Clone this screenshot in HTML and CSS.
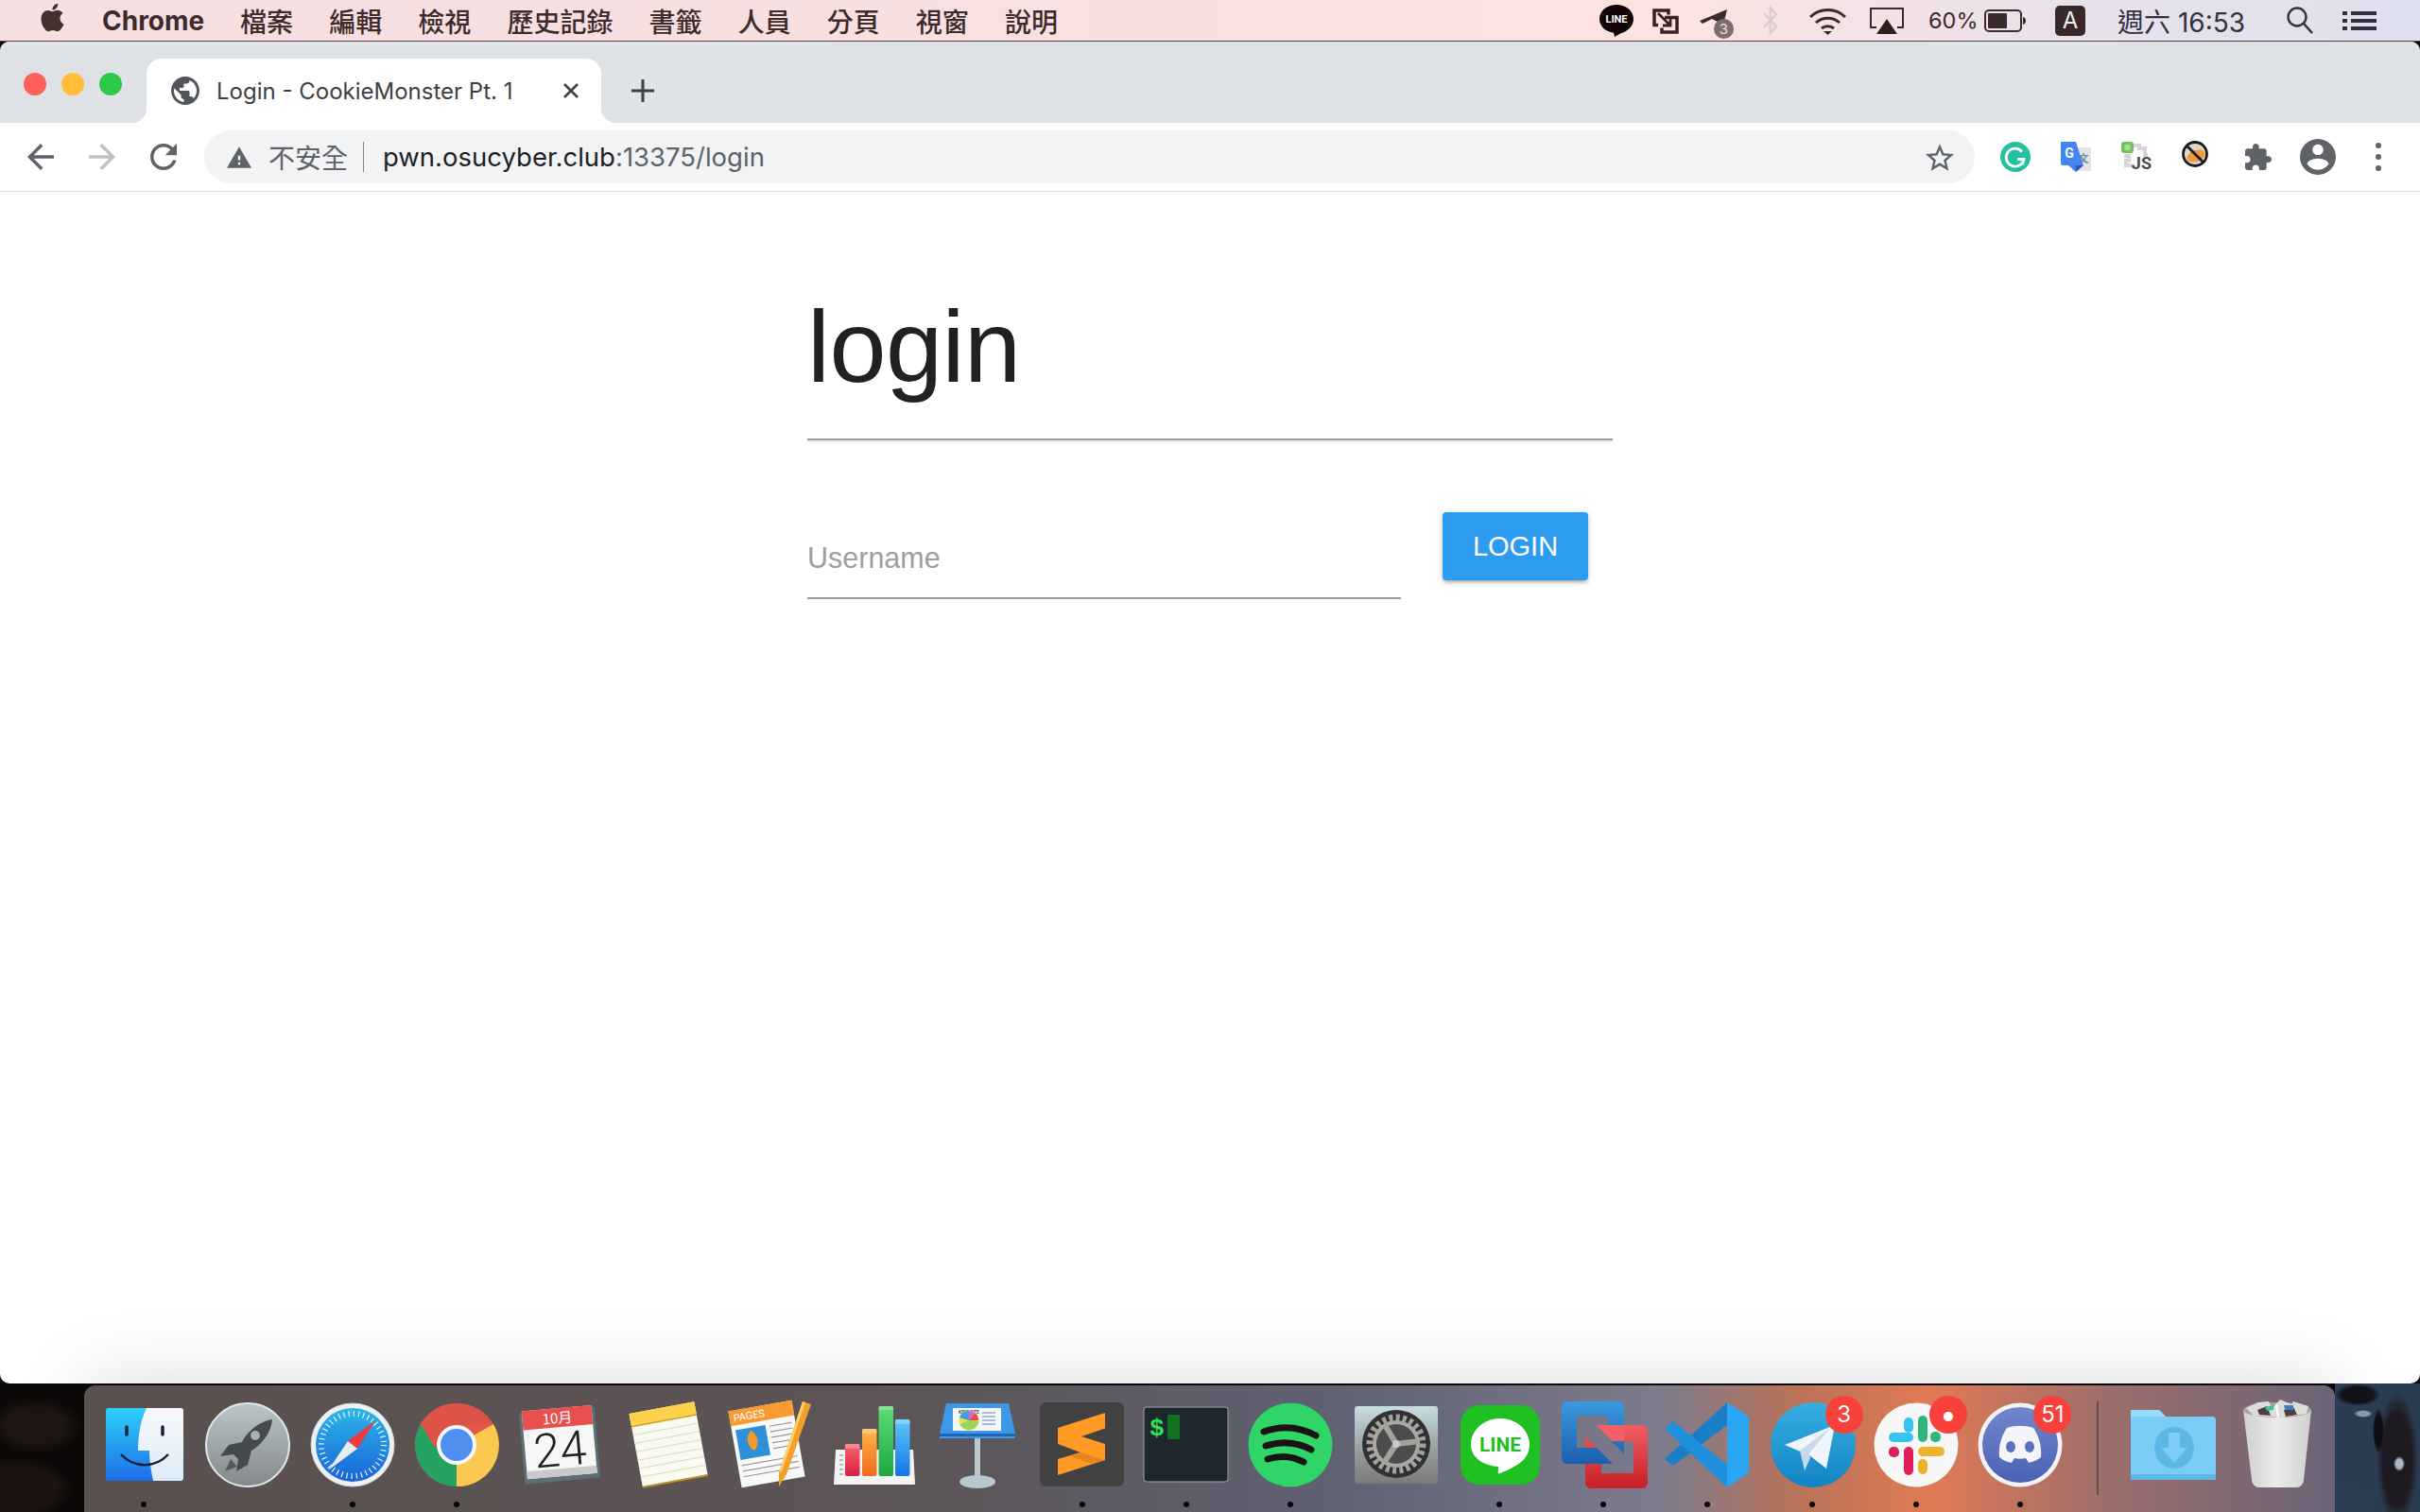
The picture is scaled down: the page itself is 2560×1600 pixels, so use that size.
FILE: index.html
```html
<!DOCTYPE html>
<html lang="zh-Hant">
<head>
<meta charset="UTF-8">
<title>Login - CookieMonster Pt. 1</title>
<link rel="stylesheet" href="styles.css">
</head>

<body>
<!-- mac menu bar -->
<div class="menubar">
    <svg class="apple" viewBox="3 1.5 18 21"><path d="M18.71 19.5c-.83 1.24-1.71 2.45-3.05 2.47-1.34.03-1.77-.79-3.29-.79-1.53 0-2 .77-3.27.82-1.31.05-2.3-1.32-3.14-2.53C4.25 17 2.94 12.45 4.7 9.39c.87-1.52 2.43-2.48 4.12-2.51 1.28-.02 2.5.87 3.29.87.78 0 2.26-1.07 3.81-.91.65.03 2.47.26 3.64 1.98-.09.06-2.17 1.28-2.15 3.81.03 3.02 2.65 4.03 2.68 4.04-.03.07-.42 1.44-1.38 2.83M13 3.5c.73-.83 1.94-1.46 2.94-1.5.13 1.17-.34 2.35-1.04 3.19-.69.85-1.83 1.51-2.95 1.42-.15-1.15.41-2.35 1.05-3.11z"/></svg>
    <ul class="menu">
        <li class="app">Chrome</li><li>檔案</li><li>編輯</li><li>檢視</li><li>歷史記錄</li><li>書籤</li><li>人員</li><li>分頁</li><li>視窗</li><li>說明</li>
    </ul>
    <div class="status">
        <svg class="st-line" viewBox="0 0 36 34"><path d="M18 0c10 0 18 6.500 18 15 0 8-6 13-14 15.500L16 34l-1-4.200C6.500 28.500 0 23 0 15 0 6.500 8 0 18 0z" fill="#120606"/><text x="18" y="19" class="st-line-text">LINE</text></svg>
        <svg class="st-vm" viewBox="0 0 28 29"><path d="M6 19.500H2V4h15v4.500M13 11.500H26V27H10v-4.500" stroke="#3a2020" stroke-width="3.500" fill="none"/><path d="M6 7l13 13M11 20h8v-8" stroke="#3a2020" stroke-width="2.800" fill="none"/></svg>
        <div class="st-tg">
            <svg viewBox="0 0 37 31"><path d="M1 16L30 4 26 20 14 14 4 19z" fill="#3a2a2a"/></svg>
            <span class="tg-count">3</span>
        </div>
        <svg class="st-bt" viewBox="0 0 19 31"><path d="M3 8l13 14-6.500 7V2L16 9 3 23" fill="none" stroke="#d8cccc" stroke-width="2"/></svg>
        <svg class="st-wifi" viewBox="0 0 41 30"><path d="M2 11c10-10 27-10 37 0M8 17c7-6.500 18-6.500 25 0M14 23c3.500-3 9.500-3 13 0" fill="none" stroke="#3a2a2a" stroke-width="3"/><path d="M16 26h9l-4.500 4z" fill="#3a2a2a"/></svg>
        <svg class="st-air" viewBox="0 0 36 28"><path d="M7 21H1V1h34v20h-6" fill="none" stroke="#3a2a2a" stroke-width="2"/><path d="M18 12l11 16H7z" fill="#2e2020"/></svg>
        <span class="st-pct">60%</span>
        <svg class="st-bat" viewBox="0 0 44 24"><rect x="1" y="1" width="38" height="22" rx="4" fill="none" stroke="#3a2a2a" stroke-width="2"/><rect x="4" y="4" width="20" height="16" rx="1" fill="#3a2a2a"/><path d="M41 8c2 .5 3 2 3 4s-1 3.500-3 4z" fill="#3a2a2a"/></svg>
        <span class="st-input">A</span>
        <span class="st-clock">週六 16:53</span>
        <svg class="st-search" viewBox="0 0 28 29"><circle cx="11" cy="11" r="9.500" fill="none" stroke="#32323c" stroke-width="2.400"/><path d="M18 18l9 10" stroke="#32323c" stroke-width="2.600"/></svg>
        <svg class="st-list" viewBox="0 0 36 20"><path d="M0 0h5v4H0zM9 0h27v4H9zM0 8h5v4H0zM9 8h27v4H9zM0 16h5v4H0zM9 16h27v4H9z" fill="#30303e"/></svg>
    </div>
</div>

<div class="window">
    <div class="tabstrip">
        <div class="lights"><i class="red"></i><i class="yellow"></i><i class="green"></i></div>
        <div class="tab">
            <svg class="favicon" viewBox="2 2 20 20"><path d="M12 2C6.480 2 2 6.480 2 12s4.480 10 10 10 10-4.480 10-10S17.520 2 12 2zm-1 17.930c-3.950-.49-7-3.850-7-7.930 0-.62.08-1.210.21-1.790L9 15v1c0 1.100.9 2 2 2v1.930zm6.900-2.540c-.26-.81-1-1.390-1.900-1.390h-1v-3c0-.55-.45-1-1-1H8v-2h2c.55 0 1-.45 1-1V7h2c1.100 0 2-.9 2-2v-.41c2.930 1.190 5 4.060 5 7.410 0 2.080-.8 3.970-2.100 5.390z"/></svg>
            <span class="tab-title">Login - CookieMonster Pt. 1</span>
            <svg class="tab-close" viewBox="0 0 16 16"><path d="M1 1l14 14M15 1L1 15" stroke="#3c4043" stroke-width="2.600"/></svg>
        </div>
        <svg class="newtab" viewBox="0 0 24 24"><path d="M12 0v24M0 12h24" stroke="#3c4043" stroke-width="3"/></svg>
    </div>

    <div class="toolbar">
        <svg class="nav nav-back" viewBox="4 4 16 16"><path d="M20 11H7.830l5.590-5.590L12 4l-8 8 8 8 1.410-1.410L7.830 13H20v-2z"/></svg>
        <svg class="nav nav-fwd" viewBox="4 4 16 16"><path d="M12 4l-1.410 1.410L16.170 11H4v2h12.170l-5.580 5.590L12 20l8-8z"/></svg>
        <svg class="nav nav-reload" viewBox="4 4 16 16"><path d="M17.650 6.350C16.200 4.900 14.210 4 12 4c-4.420 0-7.990 3.580-7.990 8s3.570 8 7.990 8c3.730 0 6.840-2.550 7.730-6h-2.080c-.82 2.330-3.040 4-5.650 4-3.310 0-6-2.690-6-6s2.690-6 6-6c1.660 0 3.140.69 4.220 1.780L13 11h7V4l-2.350 2.350z"/></svg>
        <div class="omnibox">
            <svg class="warn" viewBox="1 2 22 19"><path d="M1 21h22L12 2 1 21zm12-3h-2v-2h2v2zm0-4h-2v-4h2v4z"/></svg>
            <span class="insecure">不安全</span>
            <span class="sep"></span>
            <span class="url"><b>pwn.osucyber.club</b>:13375/login</span>
            <svg class="star" viewBox="2 2 20 19"><path d="M22 9.240l-7.190-.62L12 2 9.190 8.630 2 9.240l5.460 4.730L5.820 21 12 17.270 18.180 21l-1.630-7.030L22 9.240zM12 15.400l-3.760 2.270 1-4.280-3.320-2.880 4.380-.38L12 6.100l1.710 4.040 4.380.38-3.320 2.880 1 4.280L12 15.400z"/></svg>
        </div>
        <div class="ext">
            <svg class="ext-gr" viewBox="0 0 32 32"><circle cx="16" cy="16" r="16" fill="#25c19f"/><path d="M23 10.500A9.500 9.500 0 1 0 25 18.500H18M25 18.500l-1.500 6" fill="none" stroke="#fff" stroke-width="2.800"/></svg>
            <svg class="ext-tr" viewBox="0 0 32 32"><rect x="12" y="6" width="20" height="25" fill="#e2e4e6"/><path d="M0 0h16l8 25H17l-1 7-8-7H2a2 2 0 0 1-2-2z" fill="#4285f4"/><path d="M16 25h8l-8 7z" fill="#2a56c6"/><text x="9" y="17" class="ext-g">G</text><text x="24" y="22" class="ext-wen">文</text></svg>
            <svg class="ext-js" viewBox="0 0 33 32"><path d="M13 4h6v3h6v7h3M3 15h5v5h-3v5h9" fill="none" stroke="#d6d6d6" stroke-width="4"/><rect x="0" y="0" width="13" height="12" rx="3" fill="#6fc25a"/><rect x="3.500" y="3" width="6" height="6" fill="#a8dc96"/><text x="32" y="29" class="ext-jstext">JS</text></svg>
            <svg class="ext-no" viewBox="0 0 28 28"><circle cx="14" cy="14" r="12.500" fill="#dfd8cc" stroke="#1c1c1c" stroke-width="2.800"/><ellipse cx="15" cy="16" rx="10" ry="6" fill="#ef9a3c" transform="rotate(-20 15 16)"/><path d="M5 5l18 18" stroke="#1c1c1c" stroke-width="2.800"/></svg>
            <svg class="ext-pz" viewBox="2 1 21 21"><path d="M20.500 11H19V7c0-1.100-.9-2-2-2h-4V3.500C13 2.120 11.880 1 10.500 1S8 2.120 8 3.500V5H4c-1.100 0-1.990.9-1.990 2v3.800H3.500c1.490 0 2.700 1.210 2.700 2.700s-1.210 2.700-2.700 2.700H2V20c0 1.100.9 2 2 2h3.800v-1.500c0-1.490 1.210-2.700 2.700-2.700 1.490 0 2.700 1.210 2.700 2.700V22H17c1.100 0 2-.9 2-2v-4h1.500c1.380 0 2.500-1.120 2.500-2.500S21.880 11 20.500 11z"/></svg>
            <svg class="ext-ac" viewBox="2 2 20 20"><path d="M12 2C6.480 2 2 6.480 2 12s4.480 10 10 10 10-4.480 10-10S17.520 2 12 2zm0 3c1.660 0 3 1.340 3 3s-1.340 3-3 3-3-1.340-3-3 1.340-3 3-3zm0 14.200c-2.500 0-4.710-1.280-6-3.220.03-1.990 4-3.080 6-3.080 1.990 0 5.970 1.090 6 3.080-1.290 1.940-3.500 3.220-6 3.220z"/></svg>
            <div class="ext-dots"><i></i><i></i><i></i></div>
        </div>
    </div>

    <div class="page">
        <div class="box">
            <h1>login</h1>
            <hr>
            <form class="login-form" action="/" method="get">
                <input class="username" type="text" placeholder="Username">
                <button class="login-btn" type="button">LOGIN</button>
            </form>
        </div>
    </div>
</div>

<!-- dock -->
<div class="dockrow">
    <div class="dock">
        <div class="item on"><svg viewBox="0 0 90 90">
            <defs><linearGradient id="fb" x1="0" y1="0" x2="0" y2="1"><stop offset="0" stop-color="#2cd0fb"/><stop offset="1" stop-color="#1d6fe8"/></linearGradient>
            <linearGradient id="fw" x1="0" y1="0" x2="0" y2="1"><stop offset="0" stop-color="#f8f9fb"/><stop offset="1" stop-color="#dcebf6"/></linearGradient></defs>
            <rect x="5" y="6" width="82" height="77" rx="3" fill="url(#fb)"/>
            <path d="M48 6h36a3 3 0 0 1 3 3v71a3 3 0 0 1-3 3H55c-2-10-4-20-4-32H39c0-18 3-32 9-45z" fill="url(#fw)"/>
            <path d="M27 26v8M65 26v8" stroke="#14233c" stroke-width="3.500" stroke-linecap="round"/>
            <path d="M21 55c14 15 36 15 50 0" fill="none" stroke="#14203a" stroke-width="2.500"/>
        </svg></div>
        <div class="item"><svg viewBox="0 0 90 90">
            <defs><linearGradient id="lp" x1="0" y1="0" x2="0" y2="1"><stop offset="0" stop-color="#b9c6c9"/><stop offset="1" stop-color="#84888a"/></linearGradient></defs>
            <circle cx="45" cy="45" r="44" fill="url(#lp)" stroke="#dfe6e8" stroke-width="2"/>
            <path d="M71 18c-13 2-26 12-32 24l-14 3-9 12 14-2 5 5-2 13 12-7 4-15c12-7 21-20 22-33z" fill="#454a4c"/>
            <path d="M27 60l-6 13 13-5z" fill="#55595b"/>
            <circle cx="53" cy="35" r="5" fill="#a9b1b3"/>
        </svg></div>
        <div class="item on"><svg viewBox="0 0 90 90">
            <defs><linearGradient id="sf" x1="0" y1="0" x2="0" y2="1"><stop offset="0" stop-color="#2bb6e8"/><stop offset="1" stop-color="#1a64d8"/></linearGradient></defs>
            <circle cx="45" cy="45" r="44" fill="#eef1f4" stroke="#cfd2d6"/>
            <circle cx="45" cy="45" r="39" fill="url(#sf)"/>
            <circle cx="45" cy="45" r="33" fill="none" stroke="#e9f3fb" stroke-width="6" stroke-dasharray="1.200 4"/>
            <path d="M69 19L40 41l10 8z" fill="#ef3a3f"/>
            <path d="M19 72l31-23-10-8z" fill="#e8ecef"/>
        </svg></div>
        <div class="item on"><svg viewBox="0 0 90 90">
            <circle cx="45" cy="45" r="44" fill="#e2574c"/>
            <path d="M45 45L84 23A44 44 0 0 1 45 89z" fill="#fdc84f"/>
            <path d="M45 45L45 89A44 44 0 0 1 7 23z" fill="#24a262"/>
            <path d="M45 1A44 44 0 0 1 84 23H45L22 48 7 23A44 44 0 0 1 45 1z" fill="#dd5348"/>
            <circle cx="45" cy="45" r="21" fill="#f4f6f8"/>
            <circle cx="45" cy="45" r="17" fill="#4f8ff0"/>
        </svg></div>
        <div class="item"><svg viewBox="0 0 90 90">
            <g transform="rotate(-5 45 45)">
            <rect x="4" y="8" width="80" height="75" fill="#5c6f78"/>
            <rect x="7" y="6" width="74" height="72" fill="#f7f7f7"/>
            <rect x="7" y="6" width="74" height="20" fill="#e8504e"/>
            <rect x="7" y="70" width="74" height="8" fill="#c9c9c9"/>
            <text x="44" y="22" class="cal-month">10月</text>
            <text x="44" y="67" class="cal-day">24</text>
            </g>
        </svg></div>
        <div class="item"><svg viewBox="0 0 90 90">
            <g transform="rotate(-10.500 49 44)">
            <rect x="14" y="5" width="70" height="79" fill="#fbfaef"/>
            <rect x="14" y="5" width="70" height="14" fill="#fbd249"/>
            <path d="M14 19h70" stroke="#c9a02c" stroke-width="1.500"/>
            <path d="M14 28h70M14 37h70M14 46h70M14 55h70M14 64h70M14 73h70" stroke="#d9d9d2"/>
            <path d="M14 84h70" stroke="#b98f2a" stroke-width="2"/>
            </g>
        </svg></div>
        <div class="item"><svg viewBox="0 0 90 90">
            <g transform="rotate(-10 42 44)">
            <rect x="8" y="3" width="68" height="82" fill="#f9f9f9"/>
            <rect x="8" y="3" width="68" height="16" fill="#f79a2f"/>
            <text x="12" y="15" class="pg-title">PAGES</text>
            <rect x="12" y="24" width="32" height="32" fill="#2f8fd8"/>
            <path d="M28 27c6 5 8 14 0 22-8-8-6-17 0-22z" fill="#f39a2b"/>
            <path d="M48 26h24M48 32h24M48 38h24M48 44h24M48 50h24M12 62h60M12 68h60M12 74h60" stroke="#9a9a9a" stroke-width="1.200"/>
            </g>
            <path d="M80-1l9 3L63 76l-8 13 0-15z" fill="#f2a027"/>
            <path d="M80-1l3 1-25 73-3 1z" fill="#ffcf6e"/>
        </svg></div>
        <div class="item"><svg viewBox="0 0 90 90">
            <defs>
            <linearGradient id="n1" x1="0" y1="0" x2="0" y2="1"><stop offset="0" stop-color="#f9646b"/><stop offset="1" stop-color="#d62041"/></linearGradient>
            <linearGradient id="n2" x1="0" y1="0" x2="0" y2="1"><stop offset="0" stop-color="#ffb54a"/><stop offset="1" stop-color="#f06a1c"/></linearGradient>
            <linearGradient id="n3" x1="0" y1="0" x2="0" y2="1"><stop offset="0" stop-color="#5ade75"/><stop offset="1" stop-color="#1ea83e"/></linearGradient>
            <linearGradient id="n4" x1="0" y1="0" x2="0" y2="1"><stop offset="0" stop-color="#5cc8fa"/><stop offset="1" stop-color="#1475e4"/></linearGradient>
            </defs>
            <path d="M5 50H87L89 87H3z" fill="#f3f3f3"/>
            <path d="M9 56h4M9 61h4M9 66h4M9 71h4M9 76h4" stroke="#a9a9a9" stroke-width="1.500"/>
            <rect x="15" y="44" width="15.500" height="34" rx="2" fill="url(#n1)"/>
            <rect x="33" y="28" width="15.500" height="50" rx="2" fill="url(#n2)"/>
            <rect x="50.500" y="4" width="15.500" height="74" rx="2" fill="url(#n3)"/>
            <rect x="68" y="18" width="15.500" height="60" rx="2" fill="url(#n4)"/>
            <path d="M15 44h15.500v5H15zM33 28h15.500v5H33zM50.500 4H66v4H50.500zM68 18h15.500v5H68z" fill="#fff" opacity=".25"/>
        </svg></div>
        <div class="item"><svg viewBox="0 0 90 90">
            <rect x="42" y="38" width="6" height="42" fill="#b9c7d0"/>
            <ellipse cx="45" cy="84" rx="19" ry="7" fill="#b8c6d0"/>
            <path d="M12 1H78L85 33V38H5V33z" fill="#3f97e8"/>
            <rect x="19" y="6" width="51" height="24" fill="#f5f6f7"/>
            <text x="25" y="12" class="kn-title">KEYNOTE</text>
            <circle cx="36" cy="19" r="10.500" fill="#e8e04c"/>
            <path d="M36 19v-10.500a10.500 10.500 0 0 0-10 7.500z" fill="#3f9fe0"/>
            <path d="M36 19v-10.500a10.500 10.500 0 0 1 7 3z" fill="#d668d8"/>
            <path d="M36 19l7-7.500a10.500 10.500 0 0 1 3 7.500z" fill="#e8484c"/>
            <path d="M36 19l10.500 1a10.500 10.500 0 0 1-20 3z" fill="#9ad55c"/>
            <path d="M50 11h14M50 15h14M50 19h14M50 23h14" stroke="#8aa8cc" stroke-width="1.500"/>
            <path d="M5 33H85V36H5z" fill="#1d65b5"/>
        </svg></div>
        <div class="item on"><svg viewBox="0 0 90 90">
            <rect x="0" y="0" width="89" height="89" rx="6" fill="#424242"/>
            <path d="M69 11L19 27V44L43 53 19 60V77L69 61V44L44 36 69 27.500z" fill="#ff9b24"/>
            <path d="M43 53L69 61 55 65 31 56.500z" fill="#e8861c"/>
        </svg></div>
        <div class="item on"><svg viewBox="0 0 90 90">
            <rect x="0" y="5" width="89" height="79" rx="3" fill="#1f272e" stroke="#9ca3a8"/>
            <text x="6" y="35" class="term-prompt">$</text>
            <rect x="25" y="13" width="13" height="26" fill="#13701f"/>
        </svg></div>
        <div class="item on"><svg viewBox="0 0 90 90">
            <circle cx="45" cy="45" r="44.500" fill="#2fd566"/>
            <path d="M17 31c19-7 38-5 55 4M19 46c16-5 33-4 48 4M21 60c13-4 27-3 38 3" fill="none" stroke="#191414" stroke-width="7" stroke-linecap="round"/>
        </svg></div>
        <div class="item"><svg viewBox="0 0 90 90">
            <defs><linearGradient id="sp" x1="0" y1="0" x2="0" y2="1"><stop offset="0" stop-color="#c8dde2"/><stop offset=".55" stop-color="#9a9fa1"/><stop offset="1" stop-color="#7a7a7a"/></linearGradient></defs>
            <rect x="2" y="4" width="88" height="82" rx="3" fill="url(#sp)"/>
            <circle cx="46" cy="44" r="36" fill="#303133"/>
            <circle cx="46" cy="44" r="28" fill="none" stroke="#a5a29e" stroke-width="7" stroke-dasharray="4 3.300"/>
            <circle cx="46" cy="44" r="23" fill="#4c4c4c" stroke="#aaa7a3" stroke-width="4"/>
            <path d="M46 44L34 24M46 44L71 41M46 44L33 64" stroke="#a5a29e" stroke-width="6"/>
            <circle cx="46" cy="44" r="4" fill="#c8c9cb"/>
        </svg></div>
        <div class="item on"><svg viewBox="0 0 90 90">
            <rect x="4" y="3" width="84" height="84" rx="20" fill="#1fc021"/>
            <path d="M46 17c17 0 31 12 31 28 0 17-17 24-31 30-2 1-3 0-2-2l0-5C28 67 15 58 15 45c0-16 14-28 31-28z" fill="#fff"/>
            <text x="46" y="52" class="line-text">LINE</text>
        </svg></div>
        <div class="item on"><svg viewBox="0 0 90 90">
            <defs><linearGradient id="vb" x1="0" y1="0" x2="0" y2="1"><stop offset="0" stop-color="#3a9ae0"/><stop offset="1" stop-color="#1a5fae"/></linearGradient>
            <linearGradient id="vr" x1="0" y1="0" x2="0" y2="1"><stop offset="0" stop-color="#f35e65"/><stop offset="1" stop-color="#c81e25"/></linearGradient></defs>
            <path d="M38 24H86a6 6 0 0 1 6 6V85a6 6 0 0 1-6 6H32a6 6 0 0 1-6-6V36L43 53V75H77V41H54z" fill="url(#vr)"/>
            <path d="M7-1H61a6 6 0 0 1 6 6V54L50 38V14H17V48H38L55 65H7a6 6 0 0 1-6-6V5a6 6 0 0 1 6-6z" fill="url(#vb)"/>
            <path d="M38 24H67V41H54z" fill="#f35e65"/>
        </svg></div>
        <div class="item on"><svg viewBox="0 0 90 90">
            <path d="M66 0L66 24 9 67 0 60z" fill="#1a7fc6"/>
            <path d="M0 28L9 20 66 66V90z" fill="#1f90dd"/>
            <path d="M66 0L87 14Q89 16 89 18V72Q89 74 87 76L66 90z" fill="#2aa6f4"/>
        </svg></div>
        <div class="item on"><svg viewBox="0 0 90 90">
            <defs><linearGradient id="tg" x1="0" y1="0" x2="0" y2="1"><stop offset="0" stop-color="#37aee2"/><stop offset="1" stop-color="#1284c4"/></linearGradient></defs>
            <circle cx="46" cy="45" r="45" fill="url(#tg)"/>
            <path d="M16 45l53-21-9 46-18-14z" fill="#eef6fb"/>
            <path d="M32 51l5 21 6-13-1-5 22-27z" fill="#c8daea"/>
        </svg><span class="badge">3</span></div>
        <div class="item on"><svg viewBox="0 0 90 90">
            <circle cx="45" cy="45" r="44.500" fill="#f7f7f7"/>
            <rect x="16" y="32" width="26" height="10" rx="5" fill="#36c5f0"/>
            <rect x="32" y="16" width="10" height="16" rx="5" fill="#36c5f0"/>
            <rect x="47" y="14" width="10" height="28" rx="5" fill="#2eb67d"/>
            <rect x="60" y="31" width="11" height="11" rx="5" fill="#2eb67d"/>
            <rect x="47" y="47" width="28" height="10" rx="5" fill="#ecb22e"/>
            <rect x="47" y="60" width="10" height="16" rx="5" fill="#ecb22e"/>
            <rect x="32" y="47" width="10" height="30" rx="5" fill="#e01e5a"/>
            <rect x="16" y="47" width="11" height="11" rx="5" fill="#e01e5a"/>
        </svg><span class="badge badge-dot">•</span></div>
        <div class="item on"><svg viewBox="0 0 90 90">
            <defs><linearGradient id="dc" x1="0" y1="0" x2="0" y2="1"><stop offset="0" stop-color="#7186cc"/><stop offset="1" stop-color="#4a62b4"/></linearGradient></defs>
            <circle cx="45" cy="45" r="44.500" fill="#f3f3f3"/>
            <circle cx="45" cy="45" r="40" fill="url(#dc)"/>
            <path d="M31 27c9-3 19-3 28 0 6 9 9 19 8 31-5 4-10 5-13 6l-3-5c-4 1-8 1-12 0l-3 5c-4-1-8-2-13-6-1-12 2-22 8-31z" fill="#f4f5fb"/>
            <ellipse cx="35" cy="47" rx="5" ry="6" fill="#5a70bd"/>
            <ellipse cx="55" cy="47" rx="5" ry="6" fill="#5a70bd"/>
        </svg><span class="badge">51</span></div>
        <div class="divider"></div>
        <div class="item"><svg viewBox="0 0 90 90">
            <path d="M0 12a4 4 0 0 1 4-4h26l7 7h49a4 4 0 0 1 4 4v60a3 3 0 0 1-3 3H3a3 3 0 0 1-3-3z" fill="#7bcdf7"/>
            <path d="M0 8h30l7 7H0z" fill="#93dafb"/>
            <rect x="0" y="76" width="90" height="6" fill="#5db8e8"/>
            <ellipse cx="46" cy="48" rx="21" ry="22" fill="#5cb7e6"/>
            <path d="M40 32h12v16h8L46 64 32 48h8z" fill="#7bcdf7"/>
        </svg></div>
        <div class="item"><svg viewBox="0 0 90 90">
            <defs><linearGradient id="tr" x1="0" y1="0" x2="1" y2="0"><stop offset="0" stop-color="#d0d0cf"/><stop offset=".5" stop-color="#ecebea"/><stop offset="1" stop-color="#cfcfce"/></linearGradient></defs>
            <path d="M9 8L18 82a8 8 0 0 0 8 8H65a8 8 0 0 0 8-8L81 8z" fill="url(#tr)"/>
            <ellipse cx="45" cy="8" rx="36" ry="8" fill="#a5a3a0"/>
            <path d="M12 6L24 0 36-1 40 6 48-3 60 2 62-1 78 4 76 12 50 16 20 14z" fill="#dcdcdc"/>
            <path d="M24 8L34 4 38 14 26 13zM52 8L62 5 66 13 54 15z" fill="#4c403c"/>
            <path d="M32 5L41 3 41 8 34 9z" fill="#3fc0a0"/>
            <path d="M52 3L62 3 62 8 53 8z" fill="#3d7fc0"/>
            <path d="M44 2L46 16" stroke="#fff" stroke-width="2"/>
        </svg></div>
    </div>
</div>
</body>
</html>
```

FILE: styles.css
```css
html,body{ width:100%; height:100%; margin:0; padding:0; overflow:hidden;}
body{ display:flex; flex-direction:column; background:#0c0908; font-family:Inter,"Noto Sans CJK TC",sans-serif;}
svg{ display:block; flex:none;}

/* menu bar */
.menubar{ height:43px; flex:none; display:flex; align-items:center; padding-left:42px; color:#3d2b2b; background:linear-gradient(90deg,#f5dfe1 0%,#f9e0e0 50%,#fde3e0 68%,#e6e1ec 88%,#dfe0ee 100%); border-bottom:1px solid #5a4448;}
.apple{ width:27px; height:31px; fill:#43302f; margin-top:-6px;}
.menu{ list-style:none; display:flex; gap:38.1px; margin:0 0 0 39px; padding:0; font-size:28px; font-weight:500; line-height:44px; font-family:"Noto Sans CJK TC",sans-serif;}
.menu .app{ font-family:Inter,sans-serif; font-weight:700; width:108px; white-space:nowrap;}
.status{ margin-left:auto; padding-right:46px; display:flex; align-items:center;}
.st-line{ width:36px; height:34px;}
.st-line-text{ font:700 11px Roboto,sans-serif; fill:#fff; text-anchor:middle;}
.st-vm{ width:28px; height:29px; margin-left:20px;}
.st-tg{ position:relative; width:37px; height:31px; margin-left:21px;}
.st-tg svg{ width:37px; height:31px;}
.tg-count{ position:absolute; right:0; bottom:-4px; width:21px; height:21px; border-radius:50%; background:#7d6d6d; color:#e8e0e0; font-size:15px; line-height:21px; text-align:center;}
.st-bt{ width:19px; height:31px; margin-left:29px;}
.st-wifi{ width:41px; height:30px; margin-left:31px;}
.st-air{ width:36px; height:28px; margin-left:24px;}
.st-pct{ margin-left:26px; font-size:23.5px; width:49px; white-space:nowrap;}
.st-bat{ width:44px; height:24px; margin-left:10px;}
.st-input{ width:32px; height:32px; margin-left:31px; border-radius:5px; background:#38282c; color:#eee; font-size:24px; line-height:32px; text-align:center;}
.st-clock{ margin-left:34px; width:137px; font-size:28px; white-space:nowrap; color:#33303e;}
.st-search{ width:28px; height:29px; margin-left:42px;}
.st-list{ width:36px; height:20px; margin-left:31px;}

/* chrome window */
.window{ height:1420px; flex:none; display:flex; flex-direction:column; background:#fff; border-radius:10px; overflow:hidden;}
.tabstrip{ height:86px; flex:none; display:flex; align-items:flex-end; background:#dee1e6;}
.lights{ display:flex; gap:16px; width:155px; padding:0 0 29px 25px; box-sizing:border-box;}
.lights i{ width:24px; height:24px; border-radius:50%;}
.lights .red{ background:#ff5f57;}
.lights .yellow{ background:#ffbd3a;}
.lights .green{ background:#2ec94a;}
.tab{ position:relative; width:481px; height:68px; display:flex; align-items:center; padding:0 24px 0 26px; box-sizing:border-box; background:#fff; border-radius:16px 16px 0 0; font-size:24px; color:#3c4043;}
.tab::before,.tab::after{ content:""; position:absolute; bottom:0; width:16px; height:16px;}
.tab::before{ left:-16px; background:radial-gradient(circle at 0 0,transparent 16px,#fff 16.500px);}
.tab::after{ right:-16px; background:radial-gradient(circle at 100% 0,transparent 16px,#fff 16.500px);}
.favicon{ width:30px; height:30px; fill:#50565c;}
.tab-title{ margin-left:18px; white-space:nowrap; flex:1;}
.tab-close{ width:16px; height:16px;}
.newtab{ width:24px; height:24px; margin:0 0 22px 32px;}

.toolbar{ height:72px; flex:none; display:flex; align-items:center; padding-left:29px; background:#fff; border-bottom:1px solid #dadce0;}
.nav{ width:28px; height:28px; fill:#5f6368;}
.nav-fwd{ margin-left:37px; fill:#bdc1c6;}
.nav-reload{ margin-left:37px;}
.omnibox{ width:1873px; height:56px; margin-left:29px; display:flex; align-items:center; padding:0 22px 0 24px; box-sizing:border-box; background:#f1f3f4; border-radius:28px; font-size:27.5px; color:#5f6368;}
.warn{ width:26px; height:23px; fill:#5f6368;}
.insecure{ margin-left:18px; width:85px; font-size:28px; font-family:"Noto Sans CJK TC",sans-serif;}
.sep{ width:1px; height:32px; margin:0 20px 0 15px; background:#80868b;}
.url{ white-space:nowrap;}
.url b{ font-weight:400; color:#202124;}
.star{ width:30px; height:29px; margin-left:auto; fill:#5f6368;}
.ext{ display:flex; align-items:center; margin-left:27px;}
.ext svg{ fill:#5f6368;}
.ext-gr{ width:32px; height:32px;}
.ext-tr{ width:32px; height:32px; margin-left:32px;}
.ext-g{ font:700 14px Roboto,sans-serif; fill:#fff; text-anchor:middle;}
.ext-wen{ font:700 11px "Noto Sans CJK SC",sans-serif; fill:#6a8fa8; text-anchor:middle;}
.ext-js{ width:33px; height:32px; margin-left:32px; overflow:visible;}
.ext-jstext{ font:700 18px Roboto,sans-serif; fill:#4a4a4a; text-anchor:end;}
.ext-no{ width:28px; height:28px; margin:-6px 0 0 31px;}
.ext-pz{ width:28px; height:28px; margin-left:39px;}
.ext-ac{ width:38px; height:38px; margin-left:30px;}
.ext-dots{ display:flex; flex-direction:column; gap:6px; margin-left:42px;}
.ext-dots i{ width:6px; height:6px; border-radius:50%; background:#5f6368;}

/* login page */
.page{ flex:1;}
.box{ width:852px; margin:0 auto; font-family:"Liberation Sans",sans-serif;}
h1{ margin:0; padding-top:110px; font-size:108px; line-height:108px; letter-spacing:-.5px; font-weight:400; color:#212121; height:151px;}
hr{ height:2px; margin:0; border:none; background:#9a9a9a; box-shadow:0 2px 0 #eee;}
.login-form{ display:flex; align-items:flex-start; margin-top:76px;}
.username{ width:628px; height:92px; padding:6px 0 0; box-sizing:border-box; border:none; border-bottom:2px solid #9a9a9a; outline:none; background:none; font:400 30.5px "Liberation Sans",sans-serif;}
.username::placeholder{ color:#9e9e9e; opacity:1;}
.login-btn{ width:154px; height:72px; margin-left:44px; border:none; border-radius:4px; background:#2d9bf0; color:#fff; font:400 29px "Liberation Sans",sans-serif; box-shadow:0 3px 3px -2px rgba(0,0,0,.2),0 3px 4px 0 rgba(0,0,0,.14),0 1px 8px 0 rgba(0,0,0,.12);}

/* dock */
.dockrow{ flex:1; padding-top:2px; display:flex; background:
    radial-gradient(ellipse 50px 30px at 38px 45px,#1f1613 60%,transparent),
    radial-gradient(ellipse 60px 34px at 18px 112px,#1d1411 70%,transparent),
    radial-gradient(ellipse 6px 24px at calc(100% - 44px) 50px,#0e0f14 70%,transparent),
    radial-gradient(ellipse 24px 12px at calc(100% - 66px) 12px,#12141a 70%,transparent),
    radial-gradient(ellipse 6px 8px at calc(100% - 22px) 85px,#aab8c8 60%,transparent),
    radial-gradient(ellipse 10px 4px at calc(100% - 60px) 32px,#8fa0b4 60%,transparent),
    radial-gradient(ellipse 22px 70px at calc(100% - 24px) 80px,#1e1c22 70%,transparent),
    linear-gradient(90deg,#0c0908 0,#0c0908 2470px,#2f4058 2470px,#2a3a50 100%);}
.dock{ position:relative; margin-left:89px; width:2381px; display:flex; gap:20.3px; padding:18px 0 0 18px; box-sizing:border-box; border-radius:12px 12px 0 0; background:linear-gradient(90deg,#5a5050 0,#5c5455 35%,#5f6072 55%,#7c7c8e 70%,#b87258 76%,#e07a55 82%,#9c6e6c 90%,#6a6478 100%); box-shadow:0 -6px 80px rgba(0,0,0,.14);}
.item{ position:relative; width:90px; flex:none;}
.item svg{ width:90px; height:90px; overflow:visible;}
.item.on::after{ content:""; position:absolute; left:42px; top:105px; width:6px; height:6px; border-radius:50%; background:#0a0505;}
.divider{ width:2px; height:99px; margin:-1px 14px 0 15px; background:#6b4c4e;}
.badge{ position:absolute; top:-7px; right:-9px; min-width:40px; height:40px; border-radius:50%; background:#f9413b; color:#fff; font-size:24px; line-height:40px; text-align:center;}
.badge-dot{ font-size:32px;}
.cal-month{ font:400 15px "Noto Sans CJK TC",sans-serif; fill:#fff; text-anchor:middle;}
.cal-day{ font:300 50px Roboto,sans-serif; fill:#222; text-anchor:middle;}
.pg-title{ font:400 11px Roboto,sans-serif; fill:#fff;}
.kn-title{ font:700 5px Roboto,sans-serif; fill:#555;}
.term-prompt{ font:700 26px "Liberation Mono",monospace; fill:#2fe04f;}
.line-text{ font:700 21px Roboto,sans-serif; fill:#1fc021; text-anchor:middle;}
```
